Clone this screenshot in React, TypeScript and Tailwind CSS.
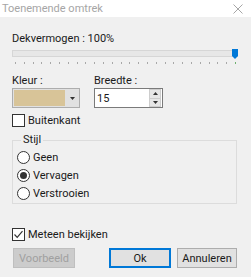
import React from 'react';

const ticks = Array.from({ length: 26 }, (_, i) => i);

function Radio({ label, checked }: { label: string; checked?: boolean }) {
  return (
    <div className="flex items-center h-[18px]">
      <div className="w-[13px] h-[13px] rounded-full border border-[#333] bg-white flex items-center justify-center">
        {checked && <div className="w-[7px] h-[7px] rounded-full bg-[#333]" />}
      </div>
      <span className="ml-[3px]">{label}</span>
    </div>
  );
}

function Check({ label, checked }: { label: string; checked?: boolean }) {
  return (
    <div className="flex items-center h-[13px]">
      <div className="w-[13px] h-[13px] border border-[#333] bg-white flex items-center justify-center">
        {checked && (
          <svg width="11" height="11" viewBox="0 0 11 11">
            <path d="M1.5 5.5 L4.2 8.3 L9.5 2.2" fill="none" stroke="#333" strokeWidth="1.2" />
          </svg>
        )}
      </div>
      <span className="ml-[3px]">{label}</span>
    </div>
  );
}

export default function App() {
  return (
    <div
      className="w-[251px] h-[277px] bg-[#f0f0f0] text-[11px] leading-[15px] text-[#1a1a1a] overflow-hidden"
      style={{ fontFamily: 'Roboto, "Open Sans", sans-serif' }}
    >
      {/* Title bar */}
      <div className="h-[17px] bg-white flex items-center justify-between pl-[2px] pr-[8px]">
        <span className="text-[#a6a6a6]">Toenemende omtrek</span>
        <svg width="10" height="10" viewBox="0 0 10 10">
          <path d="M0.5 0.5 L9.5 9.5 M9.5 0.5 L0.5 9.5" stroke="#a6a6a6" strokeWidth="1" />
        </svg>
      </div>

      <div className="px-[12px]">
        <div className="mt-[14px]">Dekvermogen : 100%</div>

        {/* Slider */}
        <div className="relative mt-[3px] h-[18px]">
          <div className="absolute left-0 right-[1px] top-[1px] h-[7px] bg-[#e7e7e7] border border-[#d6d6d6]" />
          <svg className="absolute right-[1px] top-0" width="6" height="10" viewBox="0 0 6 10">
            <path d="M0 0 H6 V7 L3 10 L0 7 Z" fill="#0078d7" />
          </svg>
          <div className="absolute left-[3px] right-[3px] top-[13px] flex justify-between">
            {ticks.map((t) => (
              <div key={t} className={`w-[1px] h-[2px] ${t === 25 ? 'bg-[#6fb06f]' : 'bg-[#a8a8a8]'}`} />
            ))}
          </div>
        </div>

        {/* Kleur / Breedte */}
        <div className="flex mt-[7px]">
          <div className="w-[82px]">
            <div className="leading-[14px]">Kleur :</div>
            <div className="w-[68px] h-[20px] border border-[#adadad] bg-[#e1e1e1] flex items-center">
              <div className="ml-[1px] w-[51px] h-[16px] bg-[#d8c498]" />
              <div className="flex-1 flex items-center justify-center">
                <svg width="5" height="3" viewBox="0 0 5 3">
                  <path d="M0 0 H5 L2.5 3 Z" fill="#333" />
                </svg>
              </div>
            </div>
          </div>
          <div>
            <div className="leading-[14px]">Breedte :</div>
            <div className="w-[69px] h-[20px] border border-[#7a7a7a] bg-white flex items-center">
              <span className="ml-[2px] flex-1">15</span>
              <div className="w-[12px] h-[18px] flex flex-col mr-[1px]">
                <div className="flex-1 bg-[#e6e6e6] border border-[#cdcdcd] flex items-center justify-center">
                  <svg width="5" height="3" viewBox="0 0 5 3">
                    <path d="M0 3 H5 L2.5 0 Z" fill="#333" />
                  </svg>
                </div>
                <div className="flex-1 bg-[#e6e6e6] border border-t-0 border-[#cdcdcd] flex items-center justify-center">
                  <svg width="5" height="3" viewBox="0 0 5 3">
                    <path d="M0 0 H5 L2.5 3 Z" fill="#333" />
                  </svg>
                </div>
              </div>
            </div>
          </div>
        </div>

        <div className="mt-[6px]">
          <Check label="Buitenkant" />
        </div>

        {/* Stijl group */}
        <div className="relative mt-[13px] h-[64px] border border-[#dcdcdc] mr-[2px]">
          <span className="absolute left-[8px] top-[-7px] px-[2px] leading-[12px] bg-[#f0f0f0]">Stijl</span>
          <div className="pt-[7px] pl-[4px]">
            <Radio label="Geen" />
            <Radio label="Vervagen" checked />
            <Radio label="Verstrooien" />
          </div>
        </div>

        <div className="mt-[24px]">
          <Check label="Meteen bekijken" checked />
        </div>

        {/* Buttons */}
        <div className="flex mt-[7px]">
          <div className="ml-[1px] w-[62px] h-[20px] bg-[#cccccc] border border-[#bfbfbf] text-[#a0a0a0] flex items-center justify-center">
            Voorbeeld
          </div>
          <div className="ml-[34px] w-[62px] h-[20px] bg-[#e1e1e1] border-2 border-[#0078d7] flex items-center justify-center">
            Ok
          </div>
          <div className="ml-[6px] w-[60px] h-[20px] bg-[#e1e1e1] border border-[#adadad] flex items-center justify-center">
            Annuleren
          </div>
        </div>
      </div>
    </div>
  );
}
